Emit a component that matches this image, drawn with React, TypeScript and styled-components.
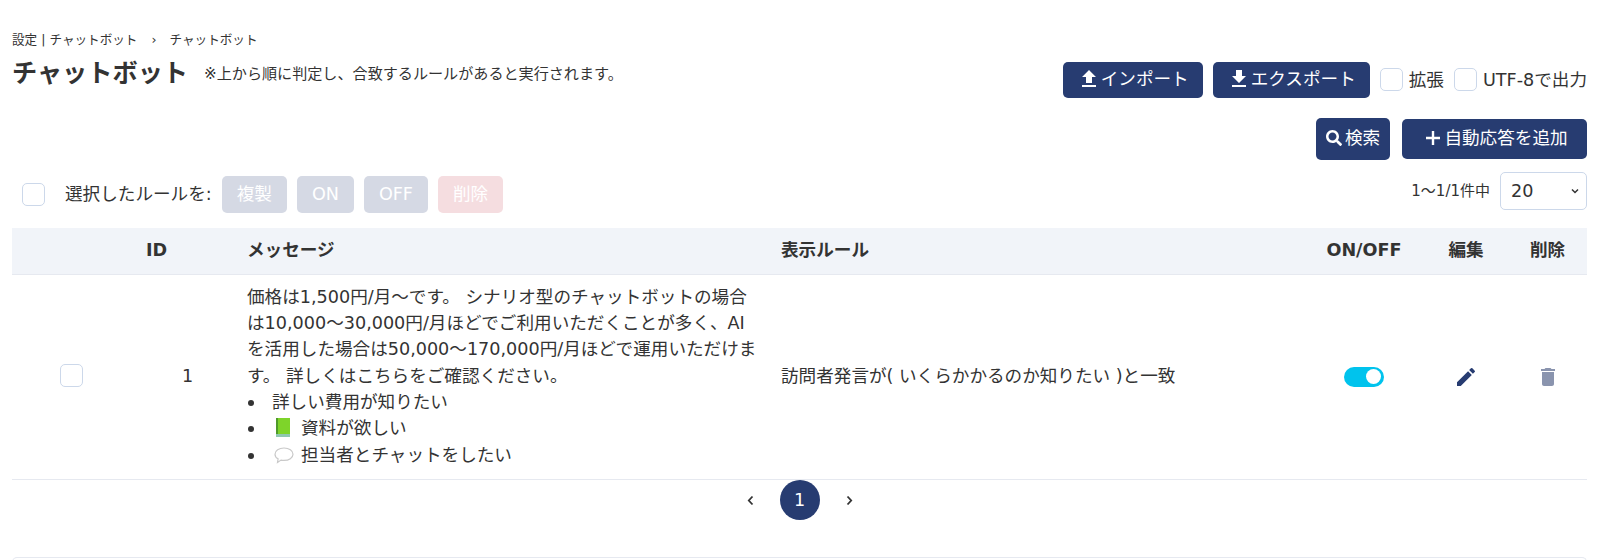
import React, { FC, ReactElement } from "react";
import styled, { createGlobalStyle } from "styled-components";
import {
  MdDelete,
  MdEdit,
  MdFileDownload,
  MdFileUpload,
} from "react-icons/md";
import { FaSearch } from "react-icons/fa";

const NAVY = "#273c71";
const TEXT = "#333333";
const LINE = "#e6e9f0";

const GlobalStyle = createGlobalStyle`
  html, body {
    margin: 0;
    background: #fff;
    color: ${TEXT};
    font-family: "DejaVu Sans", "Noto Sans CJK JP", sans-serif;
    font-size: 17.6px;
    line-height: 1.5;
  }
  * {
    box-sizing: border-box;
  }
`;

const Page = styled.div`
  padding: 32px 29px 0 12px;
  height: 560px;
  overflow: hidden;
`;

const Breadcrumb = styled.div`
  display: flex;
  align-items: center;
  height: 16px;
  font-size: 12.6px;
  line-height: 16px;
`;

const Crumb = styled.span`
  white-space: nowrap;
`;

const CrumbArrow = styled.span`
  margin: 0 13px 0 14px;
`;

const HeaderRow = styled.div`
  display: flex;
  justify-content: space-between;
  margin-top: 14px;
  height: 36px;
`;

const TitleGroup = styled.div`
  display: flex;
  align-items: center;
  gap: 16px;
  height: 22px;
`;

const Title = styled.h1`
  margin: 2px 0 0;
  font-size: 25.2px;
  font-weight: 700;
  line-height: 22px;
`;

const Note = styled.span`
  margin-top: 1px;
  font-size: 15.1px;
  line-height: 22px;
`;

const Tools = styled.div`
  display: flex;
  align-items: center;
  gap: 10px;
`;

const Button = styled.button<{ $width: number; $height: number }>`
  display: inline-flex;
  align-items: center;
  justify-content: center;
  width: ${(p) => p.$width}px;
  height: ${(p) => p.$height}px;
  padding: 0 0 2px;
  border: 0;
  border-radius: 5px;
  background: ${NAVY};
  color: #fff;
  font: inherit;
  white-space: nowrap;
`;

const SearchIcon = styled(FaSearch)`
  margin-right: 3px;
`;

const PlusIcon = styled.svg`
  width: 16px;
  height: 16px;
  margin: 0 3px 0 4px;
`;

const CheckBox = styled.input.attrs({ type: "checkbox" })`
  appearance: none;
  flex: none;
  width: 23px;
  height: 23px;
  margin: 0;
  border: 1px solid #ccd8ea;
  border-radius: 5px;
  background: #fff;
`;

const CheckLabel = styled.label`
  display: inline-flex;
  align-items: center;
  gap: 6px;
  white-space: nowrap;
`;

const ActionRow = styled.div`
  display: flex;
  justify-content: flex-end;
  align-items: center;
  gap: 12px;
  margin-top: 20px;
`;

const BulkRow = styled.div`
  display: flex;
  justify-content: space-between;
  align-items: flex-start;
  margin-top: 12px;
  height: 41px;
`;

const BulkLeft = styled.div`
  display: flex;
  align-items: center;
  padding: 4px 0 0 10px;
`;

const BulkLabel = styled.span`
  margin: 0 10px 0 20px;
  white-space: nowrap;
`;

const BulkButton = styled.button<{ $danger?: boolean }>`
  height: 37px;
  margin-right: 10px;
  padding: 0 15px;
  border: 0;
  border-radius: 5px;
  background: ${(p) => (p.$danger ? "#f5dde0" : "#d5d9e4")};
  color: #fff;
  font: inherit;
`;

const PagerInfo = styled.div`
  display: flex;
  align-items: center;
  gap: 10px;
`;

const PagerText = styled.span`
  font-size: 15px;
`;

const SelectWrap = styled.div`
  position: relative;
  width: 87px;
  height: 38px;
`;

const Select = styled.select`
  appearance: none;
  width: 100%;
  height: 100%;
  padding: 0 0 0 10px;
  border: 1px solid #ccd8ea;
  border-radius: 5px;
  background: #fff;
  color: ${TEXT};
  font: inherit;
`;

const SelectChevron = styled.svg`
  position: absolute;
  top: 16px;
  right: 8px;
  width: 8px;
  height: 6px;
  pointer-events: none;
`;

const Table = styled.table`
  width: 100%;
  margin-top: 15px;
  border-collapse: collapse;
  table-layout: fixed;
`;

const HeadCell = styled.th<{ $width: number; $align?: string; $pad?: number }>`
  width: ${(p) => p.$width}px;
  height: 46px;
  padding: 0 0 2px ${(p) => p.$pad ?? 0}px;
  background: #f1f4f9;
  border-bottom: 1px solid ${LINE};
  font-weight: 700;
  text-align: ${(p) => p.$align ?? "center"};
`;

const Cell = styled.td<{ $align?: string; $pad?: number; $padRight?: number }>`
  padding: 9px ${(p) => p.$padRight ?? 0}px 11px ${(p) => p.$pad ?? 0}px;
  border-bottom: 1px solid ${LINE};
  text-align: ${(p) => p.$align ?? "center"};
  vertical-align: middle;
`;

const RowCheck = styled(CheckBox)`
  display: block;
`;

const BubbleList = styled.ul`
  margin: 0;
  padding: 0;
  list-style: none;
`;

const BubbleItem = styled.li`
  &::before {
    content: "";
    display: inline-block;
    width: 6px;
    height: 6px;
    margin: 0 18px 2px 1px;
    border-radius: 50%;
    background: ${TEXT};
  }
`;

const Emoji = styled.svg`
  width: 24px;
  height: 22px;
  margin: 0 5px 0 0;
  vertical-align: -5px;
`;

const Toggle = styled.span`
  display: inline-flex;
  justify-content: flex-end;
  align-items: center;
  width: 40px;
  height: 20px;
  padding: 0 3px;
  border-radius: 10px;
  background: #00c3ed;
  vertical-align: middle;
`;

const Knob = styled.span`
  width: 15px;
  height: 15px;
  border-radius: 50%;
  background: #fff;
`;

const IconCell = styled.span<{ $color: string }>`
  display: inline-flex;
  color: ${(p) => p.$color};
  vertical-align: middle;
`;

const Pagination = styled.div`
  display: flex;
  justify-content: center;
  align-items: center;
  gap: 26px;
  height: 40px;
`;

const PageArrow = styled.svg`
  width: 7px;
  height: 11px;
`;

const PageNumber = styled.span`
  display: flex;
  justify-content: center;
  align-items: center;
  width: 40px;
  height: 40px;
  border-radius: 50%;
  background: ${NAVY};
  color: #fff;
`;

const CardEdge = styled.div`
  height: 20px;
  margin-top: 37px;
  border: 1px solid ${LINE};
  border-bottom: 0;
  border-radius: 5px 5px 0 0;
`;

const BookEmoji: FC = (): ReactElement => (
  <Emoji viewBox="0 0 24 22">
    <rect x="4" y="1" width="14" height="18" fill="#7ed42a" />
    <rect x="4" y="1" width="2" height="18" fill="#4f9a2a" />
    <rect x="4" y="17" width="14" height="3" fill="#8fc7b0" />
  </Emoji>
);

const ChatEmoji: FC = (): ReactElement => (
  <Emoji viewBox="0 0 24 22">
    <path
      d="M12 4c5 0 9 2.600 9 6.200s-4 6.200-9 6.200c-1 0-2 0-3-.3L5.500 18.500l.6-3.700C4 13.700 3 12 3 10.200 3 6.600 7 4 12 4z"
      fill="#fff"
      stroke="#c9c9c9"
      strokeWidth="1.2"
    />
  </Emoji>
);

const App: FC = (): ReactElement => {
  return (
    <Page>
      <GlobalStyle />
      <Breadcrumb>
        <Crumb>設定 | チャットボット</Crumb>
        <CrumbArrow>›</CrumbArrow>
        <Crumb>チャットボット</Crumb>
      </Breadcrumb>

      <HeaderRow>
        <TitleGroup>
          <Title>チャットボット</Title>
          <Note>※上から順に判定し、合致するルールがあると実行されます。</Note>
        </TitleGroup>
        <Tools>
          <Button $width={140} $height={36}>
            <MdFileUpload size={24} />
            インポート
          </Button>
          <Button $width={157} $height={36}>
            <MdFileDownload size={24} />
            エクスポート
          </Button>
          <CheckLabel>
            <CheckBox />
            拡張
          </CheckLabel>
          <CheckLabel>
            <CheckBox />
            UTF-8で出力
          </CheckLabel>
        </Tools>
      </HeaderRow>

      <ActionRow>
        <Button $width={74} $height={42}>
          <SearchIcon size={16} />
          検索
        </Button>
        <Button $width={185} $height={40}>
          <PlusIcon viewBox="0 0 16 16">
            <path d="M1 8h14M8 1v14" fill="none" stroke="#fff" strokeWidth="2.400" />
          </PlusIcon>
          自動応答を追加
        </Button>
      </ActionRow>

      <BulkRow>
        <BulkLeft>
          <CheckBox />
          <BulkLabel>選択したルールを:</BulkLabel>
          <BulkButton>複製</BulkButton>
          <BulkButton>ON</BulkButton>
          <BulkButton>OFF</BulkButton>
          <BulkButton $danger>削除</BulkButton>
        </BulkLeft>
        <PagerInfo>
          <PagerText>1〜1/1件中</PagerText>
          <SelectWrap>
            <Select defaultValue="20">
              <option>20</option>
              <option>50</option>
              <option>100</option>
            </Select>
            <SelectChevron viewBox="0 0 8 6">
              <path d="M1 1.500l3 3 3-3" fill="none" stroke={TEXT} strokeWidth="1.500" />
            </SelectChevron>
          </SelectWrap>
        </PagerInfo>
      </BulkRow>

      <Table>
        <thead>
          <tr>
            <HeadCell $width={98} />
            <HeadCell $width={127} $align="left" $pad={36}>
              ID
            </HeadCell>
            <HeadCell $width={544} $align="left" $pad={10}>
              メッセージ
            </HeadCell>
            <HeadCell $width={523} $align="left">
              表示ルール
            </HeadCell>
            <HeadCell $width={120}>ON/OFF</HeadCell>
            <HeadCell $width={84}>編集</HeadCell>
            <HeadCell $width={79}>削除</HeadCell>
          </tr>
        </thead>
        <tbody>
          <tr>
            <Cell $pad={48}>
              <RowCheck />
            </Cell>
            <Cell $align="left" $pad={72}>
              1
            </Cell>
            <Cell $align="left" $pad={10} $padRight={22}>
              価格は1,500円/月〜です。 シナリオ型のチャットボットの場合は10,000〜30,000円/月ほどでご利用いただくことが多く、AIを活用した場合は50,000〜170,000円/月ほどで運用いただけます。 詳しくはこちらをご確認ください。
              <BubbleList>
                <BubbleItem>詳しい費用が知りたい</BubbleItem>
                <BubbleItem>
                  <BookEmoji />
                  資料が欲しい
                </BubbleItem>
                <BubbleItem>
                  <ChatEmoji />
                  担当者とチャットをしたい
                </BubbleItem>
              </BubbleList>
            </Cell>
            <Cell $align="left">訪問者発言が( いくらかかるのか知りたい )と一致</Cell>
            <Cell>
              <Toggle>
                <Knob />
              </Toggle>
            </Cell>
            <Cell>
              <IconCell $color={NAVY}>
                <MdEdit size={24} />
              </IconCell>
            </Cell>
            <Cell>
              <IconCell $color="#8a94ae">
                <MdDelete size={24} />
              </IconCell>
            </Cell>
          </tr>
        </tbody>
      </Table>

      <Pagination>
        <PageArrow viewBox="0 0 7 11">
          <path d="M5.500 1.500L1.800 5.500l3.700 4" fill="none" stroke={TEXT} strokeWidth="1.800" />
        </PageArrow>
        <PageNumber>1</PageNumber>
        <PageArrow viewBox="0 0 7 11">
          <path d="M1.500 1.500l3.700 4-3.700 4" fill="none" stroke={TEXT} strokeWidth="1.800" />
        </PageArrow>
      </Pagination>

      <CardEdge />
    </Page>
  );
};

export default App;
